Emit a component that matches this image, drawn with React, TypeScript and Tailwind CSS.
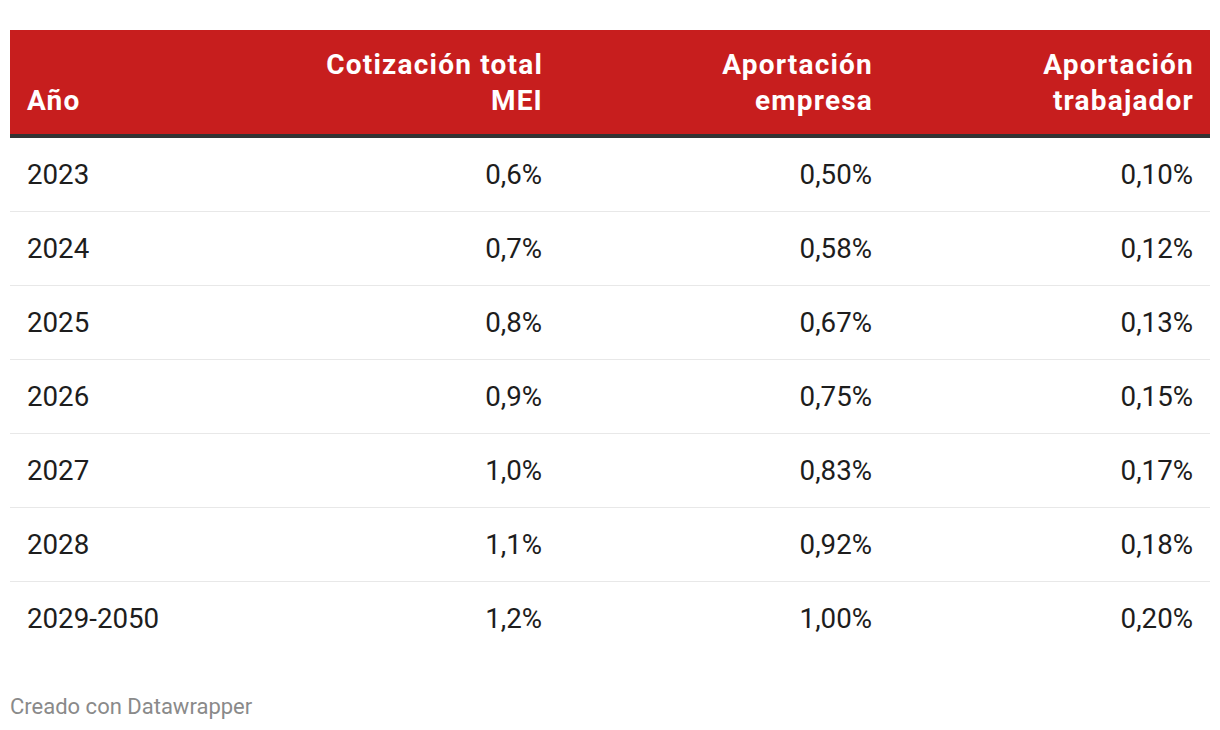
import React from 'react';

const rows: [string, string, string, string][] = [
  ['2023', '0,6%', '0,50%', '0,10%'],
  ['2024', '0,7%', '0,58%', '0,12%'],
  ['2025', '0,8%', '0,67%', '0,13%'],
  ['2026', '0,9%', '0,75%', '0,15%'],
  ['2027', '1,0%', '0,83%', '0,17%'],
  ['2028', '1,1%', '0,92%', '0,18%'],
  ['2029-2050', '1,2%', '1,00%', '0,20%'],
];

const cols = 'grid grid-cols-[220px_329px_330px_321px]';

export default function App() {
  return (
    <div className="w-[1220px] h-[730px] bg-white px-[10px] pt-[30px] font-['Roboto',sans-serif]">
      {/* Header */}
      <div className={`${cols} bg-[#c71e1e] border-b-[4px] border-[#333333] text-white font-bold text-[28px] tracking-[1.2px] leading-[36px] h-[108px] items-end pb-[15px]`}>
        <div className="px-[17px]">Año</div>
        <div className="pl-[17px] pr-[16px] text-right">Cotización total<br />MEI</div>
        <div className="pl-[17px] pr-[16px] text-right">Aportación<br />empresa</div>
        <div className="pl-[17px] pr-[16px] text-right">Aportación<br />trabajador</div>
      </div>

      {/* Body */}
      <div>
        {rows.map((r, i) => (
          <div
            key={r[0]}
            className={`${cols} h-[74px] items-center text-[27.7px] text-[#1d1d1d] ${
              i < rows.length - 1 ? 'border-b border-[#e8e8e8]' : ''
            }`}
          >
            <div className="px-[17px]">{r[0]}</div>
            <div className="px-[17px] text-right">{r[1]}</div>
            <div className="px-[17px] text-right">{r[2]}</div>
            <div className="px-[17px] text-right">{r[3]}</div>
          </div>
        ))}
      </div>

      {/* Footer */}
      <div className="mt-[34px] text-[22px] text-[#8a8a8a]">Creado con Datawrapper</div>
    </div>
  );
}
